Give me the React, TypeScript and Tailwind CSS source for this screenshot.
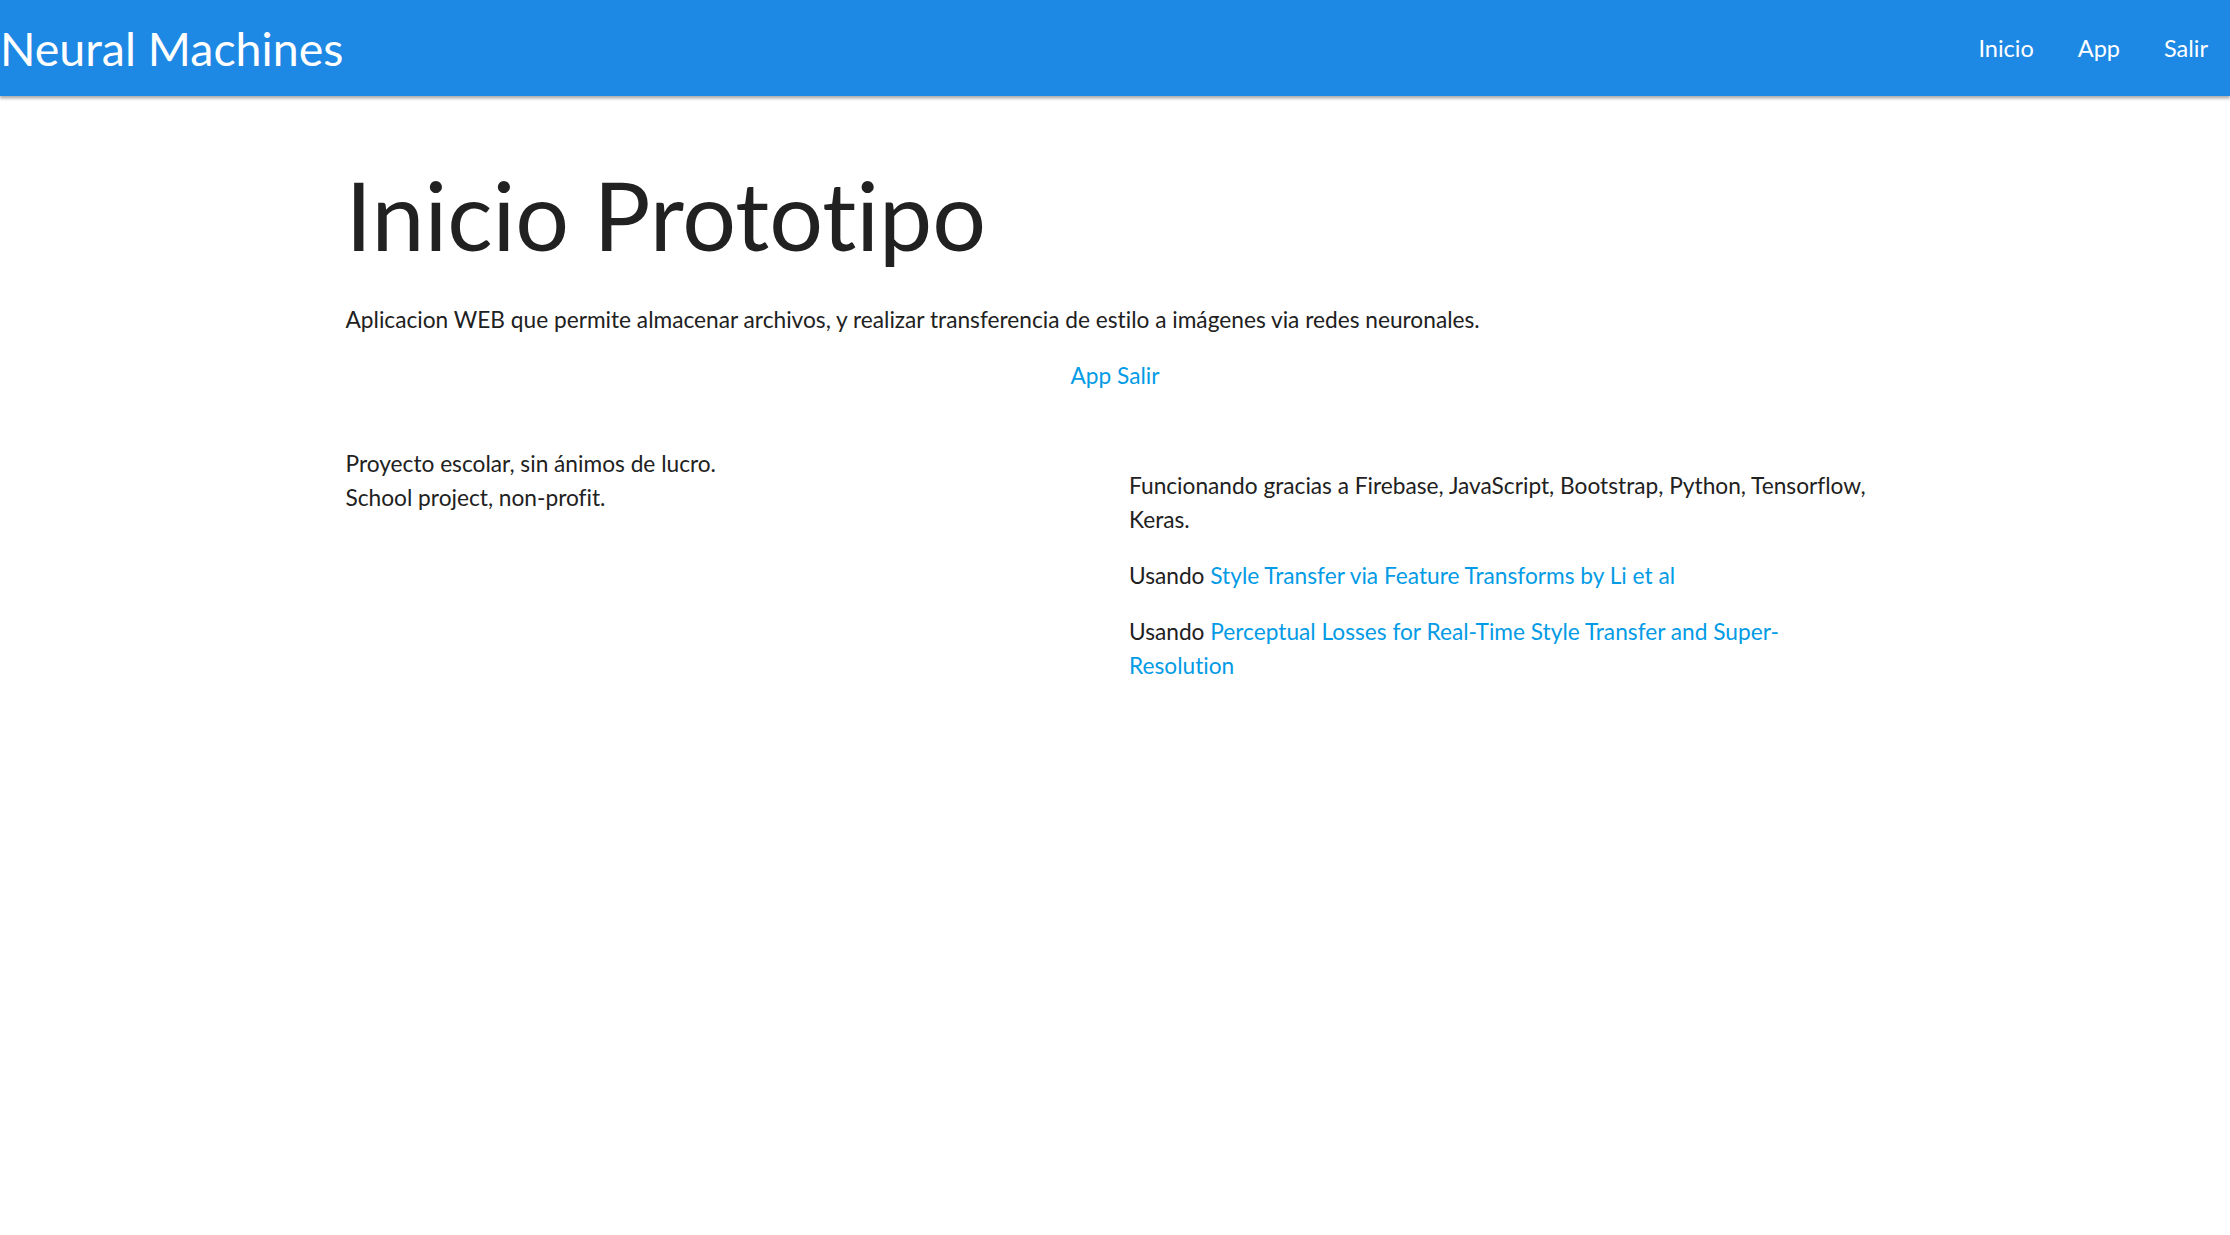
export default function App() {
  const font = { fontFamily: 'Lato, "Open Sans", sans-serif' };

  return (
    <div style={font} className="min-h-screen bg-white text-[#212121] [font-variant-ligatures:none]">
      <nav className="flex h-[96px] items-center justify-between bg-[#1e88e5] text-white shadow-[0_3px_3px_rgba(0,0,0,0.2),0_2px_2px_rgba(0,0,0,0.14)]">
        <a href="#" className="text-[46.5px] leading-[96px]">
          Neural Machines
        </a>
        <ul className="flex">
          <li><a href="#" className="block px-[22px] text-[23.5px] leading-[96px]">Inicio</a></li>
          <li><a href="#" className="block px-[22px] text-[23.5px] leading-[96px]">App</a></li>
          <li><a href="#" className="block px-[22px] text-[23.5px] leading-[96px]">Salir</a></li>
        </ul>
      </nav>

      <div className="mx-auto w-[70%]">
        <div className="px-[11px]">
          <h1 className="mt-[66px] mb-[36px] text-[95px] leading-[1.1]">Inicio Prototipo</h1>
          <p className="text-[22.7px] leading-[1.5]">
            Aplicacion WEB que permite almacenar archivos, y realizar transferencia de estilo a imágenes via redes neuronales.
          </p>
          <p className="mt-[22px] text-center text-[22.7px] leading-[1.5]">
            <a href="#" className="text-[#039be5]">App</a>{' '}
            <a href="#" className="text-[#039be5]">Salir</a>
          </p>
        </div>

        <div className="mt-[54px] grid grid-cols-2 text-[22.7px] leading-[1.5]">
          <div className="px-[11px]">
            Proyecto escolar, sin ánimos de lucro.
            <br />
            School project, non-profit.
          </div>
          <div className="pl-[14px]">
            <div className="max-w-[744px]">
              <p className="mt-[22px]">Funcionando gracias a Firebase, JavaScript, Bootstrap, Python, Tensorflow, Keras.</p>
              <p className="mt-[22px]">
                Usando <a href="#" className="text-[#039be5]">Style Transfer via Feature Transforms by Li et al</a>
              </p>
              <p className="mt-[22px]">
                Usando{' '}
                <a href="#" className="text-[#039be5]">
                  Perceptual Losses for Real-Time Style Transfer and Super-Resolution
                </a>
              </p>
            </div>
          </div>
        </div>
      </div>
    </div>
  );
}
